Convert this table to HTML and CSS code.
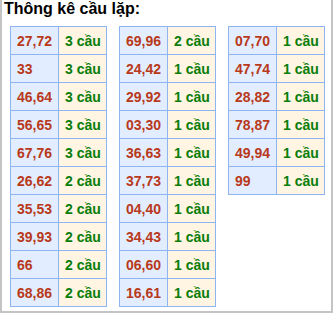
FILE: index.html
```html
<!DOCTYPE html>
<html lang="vi">
<head>
<meta charset="utf-8">
<link rel="stylesheet" href="styles.css">
</head>
<body>
<div class="frame">
  <div class="title">Thông kê cầu lặp:</div>
  <div class="tables">
    <div class="grid">
      <div class="num">27,72</div><div class="cnt">3 cầu</div>
      <div class="num">33</div><div class="cnt">3 cầu</div>
      <div class="num">46,64</div><div class="cnt">3 cầu</div>
      <div class="num">56,65</div><div class="cnt">3 cầu</div>
      <div class="num">67,76</div><div class="cnt">3 cầu</div>
      <div class="num">26,62</div><div class="cnt">2 cầu</div>
      <div class="num">35,53</div><div class="cnt">2 cầu</div>
      <div class="num">39,93</div><div class="cnt">2 cầu</div>
      <div class="num">66</div><div class="cnt">2 cầu</div>
      <div class="num">68,86</div><div class="cnt">2 cầu</div>
    </div>
    <div class="grid">
      <div class="num">69,96</div><div class="cnt">2 cầu</div>
      <div class="num">24,42</div><div class="cnt">1 cầu</div>
      <div class="num">29,92</div><div class="cnt">1 cầu</div>
      <div class="num">03,30</div><div class="cnt">1 cầu</div>
      <div class="num">36,63</div><div class="cnt">1 cầu</div>
      <div class="num">37,73</div><div class="cnt">1 cầu</div>
      <div class="num">04,40</div><div class="cnt">1 cầu</div>
      <div class="num">34,43</div><div class="cnt">1 cầu</div>
      <div class="num">06,60</div><div class="cnt">1 cầu</div>
      <div class="num">16,61</div><div class="cnt">1 cầu</div>
    </div>
    <div class="grid">
      <div class="num">07,70</div><div class="cnt">1 cầu</div>
      <div class="num">47,74</div><div class="cnt">1 cầu</div>
      <div class="num">28,82</div><div class="cnt">1 cầu</div>
      <div class="num">78,87</div><div class="cnt">1 cầu</div>
      <div class="num">49,94</div><div class="cnt">1 cầu</div>
      <div class="num">99</div><div class="cnt">1 cầu</div>
    </div>
  </div>
</div>
</body>
</html>
```

FILE: styles.css
```css
html, body {
  margin: 0;
  padding: 0;
  background: #ffffff;
}
.frame {
  box-sizing: border-box;
  width: 333px;
  height: 313px;
  border: 2px solid #c4c4c4;
  border-top: none;
  font-family: "Liberation Sans", Arial, sans-serif;
}
.title {
  font-size: 16px;
  font-weight: bold;
  color: #000;
  line-height: 18px;
  padding-left: 2px;
}
.tables {
  display: flex;
  align-items: flex-start;
  gap: 12px;
  padding-left: 8px;
  margin-top: 8px;
}
.grid {
  display: grid;
  grid-template-columns: 47px 47px;
  grid-auto-rows: 27px;
  gap: 1px;
  background: #8fb4f2;
  border: 1px solid #8fb4f2;
}
.num, .cnt {
  display: flex;
  align-items: center;
  padding-left: 6px;
  font-size: 14px;
  font-weight: bold;
}
.num {
  background: #e2eeff;
  color: #b8391b;
}
.cnt {
  background: #fff5e2;
  color: #0a7d0a;
}
```
